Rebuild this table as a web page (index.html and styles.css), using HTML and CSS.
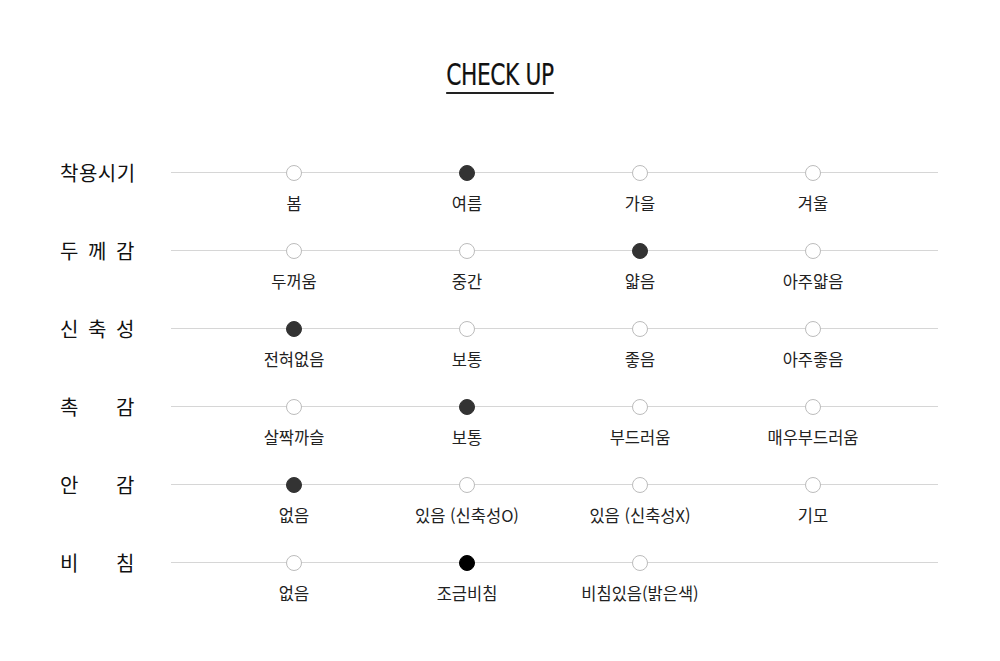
FILE: index.html
```html
<!DOCTYPE html>
<html lang="ko">
<head>
<meta charset="utf-8">
<link rel="stylesheet" href="styles.css">
</head>
<body>
<div class="page">
  <h1 class="title"><span>CHECK UP</span></h1>
  <div class="rows">
    <div class="row">
      <div class="label">착용시기</div>
      <div class="track">
        <div class="opts">
          <div class="opt"><i class="dot"></i><span>봄</span></div>
          <div class="opt"><i class="dot on"></i><span>여름</span></div>
          <div class="opt"><i class="dot"></i><span>가을</span></div>
          <div class="opt"><i class="dot"></i><span>겨울</span></div>
        </div>
      </div>
    </div>
    <div class="row">
      <div class="label">두 께 감</div>
      <div class="track">
        <div class="opts">
          <div class="opt"><i class="dot"></i><span>두꺼움</span></div>
          <div class="opt"><i class="dot"></i><span>중간</span></div>
          <div class="opt"><i class="dot on"></i><span>얇음</span></div>
          <div class="opt"><i class="dot"></i><span>아주얇음</span></div>
        </div>
      </div>
    </div>
    <div class="row">
      <div class="label">신 축 성</div>
      <div class="track">
        <div class="opts">
          <div class="opt"><i class="dot on"></i><span>전혀없음</span></div>
          <div class="opt"><i class="dot"></i><span>보통</span></div>
          <div class="opt"><i class="dot"></i><span>좋음</span></div>
          <div class="opt"><i class="dot"></i><span>아주좋음</span></div>
        </div>
      </div>
    </div>
    <div class="row">
      <div class="label">촉 감</div>
      <div class="track">
        <div class="opts">
          <div class="opt"><i class="dot"></i><span>살짝까슬</span></div>
          <div class="opt"><i class="dot on"></i><span>보통</span></div>
          <div class="opt"><i class="dot"></i><span>부드러움</span></div>
          <div class="opt"><i class="dot"></i><span>매우부드러움</span></div>
        </div>
      </div>
    </div>
    <div class="row">
      <div class="label">안 감</div>
      <div class="track">
        <div class="opts">
          <div class="opt"><i class="dot on"></i><span>없음</span></div>
          <div class="opt"><i class="dot"></i><span>있음 (신축성O)</span></div>
          <div class="opt"><i class="dot"></i><span>있음 (신축성X)</span></div>
          <div class="opt"><i class="dot"></i><span>기모</span></div>
        </div>
      </div>
    </div>
    <div class="row">
      <div class="label">비 침</div>
      <div class="track">
        <div class="opts">
          <div class="opt"><i class="dot"></i><span>없음</span></div>
          <div class="opt"><i class="dot on black"></i><span>조금비침</span></div>
          <div class="opt"><i class="dot"></i><span>비침있음(밝은색)</span></div>
        </div>
      </div>
    </div>
  </div>
</div>
</body>
</html>
```
FILE: styles.css
```css
* { box-sizing: border-box; }
html, body { margin: 0; padding: 0; background: #fff; }
body {
  font-family: "Noto Sans CJK KR", "Noto Sans", sans-serif;
  color: #222;
}
.page {
  width: 1000px;
  padding-top: 55px;
}
.title {
  margin: 0;
  text-align: center;
  font-weight: normal;
  line-height: 1;
}
.title span {
  display: inline-block;
  font-family: "DejaVu Sans Condensed", "Liberation Sans", sans-serif;
  font-size: 31px;
  letter-spacing: -0.5px;
  color: #111;
  padding-bottom: 2px;
  border-bottom: 2px solid #222;
  transform: scaleX(0.78);
  -webkit-text-stroke: 0.2px #111;
}
.rows {
  display: flex;
  flex-direction: column;
  padding-top: 71px;
  padding-left: 60px;
}
.row {
  display: flex;
  align-items: flex-start;
  height: 78px;
}
.label {
  width: 75px;
  margin-right: 36px;
  font-size: 20px;
  line-height: 24px;
  margin-top: -4px;
  text-align: justify;
  text-align-last: justify;
  letter-spacing: 0.5px;
  color: #111;
  white-space: nowrap;
}
.track {
  width: 767px;
  position: relative;
  height: 60px;
}
.track::before {
  content: "";
  position: absolute;
  left: 0;
  right: 0;
  top: 7px;
  height: 1px;
  background: #d6d6d6;
}
.opts {
  position: relative;
  display: grid;
  grid-template-columns: repeat(4, 173px);
  margin-left: 36.5px;
}
.opt {
  display: flex;
  flex-direction: column;
  align-items: center;
}
.dot {
  display: block;
  width: 16px;
  height: 16px;
  border-radius: 50%;
  border: 1px solid #bcbcbc;
  background: #fff;
}
.dot.on {
  background: #333;
  border-color: #333;
}
.dot.black {
  background: #000;
  border-color: #000;
}
.opt span {
  margin-top: 11px;
  font-size: 16.5px;
  line-height: 22px;
  color: #222;
  white-space: nowrap;
  letter-spacing: 0;
}
```
